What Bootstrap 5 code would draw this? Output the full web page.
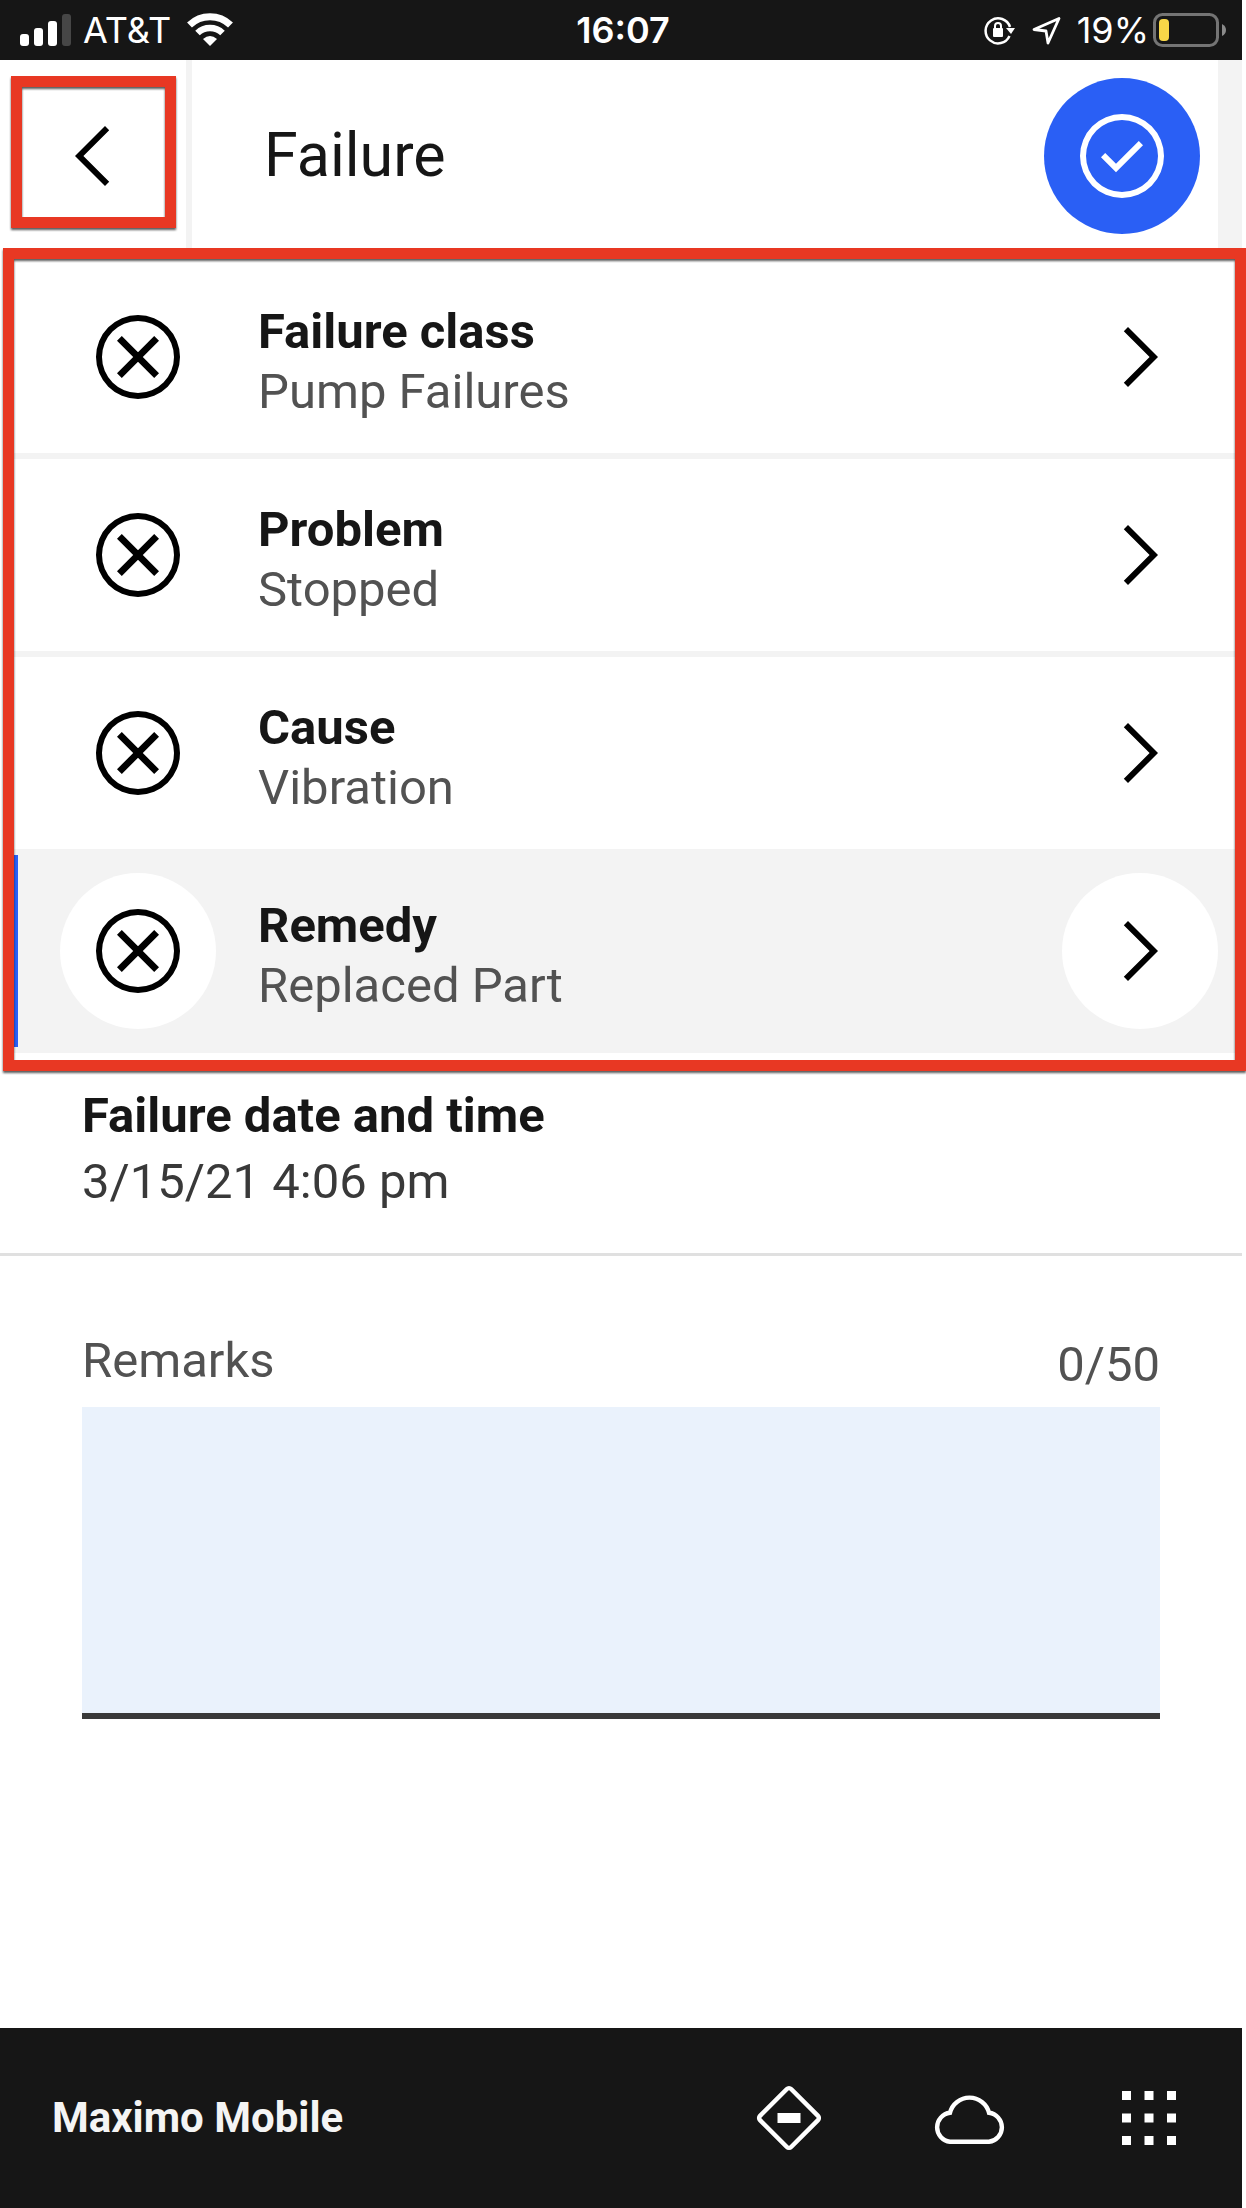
<!DOCTYPE html>
<html lang="en">
<head>
<meta charset="utf-8">
<meta name="viewport" content="width=device-width, initial-scale=1">
<title>Failure</title>
<link href="https://cdn.jsdelivr.net/npm/bootstrap@5.3.0/dist/css/bootstrap.min.css" rel="stylesheet">
<style>
  body { font-family: Roboto, "Noto Sans", sans-serif; font-size: 49px; line-height: 60px; color: #161616; background: #fff; }
  .app { margin-right: 4px; }
  .status { height: 60px; background: #161616; color: #fff; font-family: Inter, sans-serif; font-size: 36px; line-height: 60px; padding: 0 16px 0 20px; }
  .side { flex: 1 1 0; }
  .topbar { height: 192px; border-right: 24px solid #f3f3f3; }
  .back-cell { width: 192px; border-right: 6px solid #f3f3f3; }
  .title { font-size: 61px; font-weight: 400; padding-left: 72px; }
  .round { width: 156px; height: 156px; border-radius: 50%; padding: 0; border: 0; background: transparent; color: #000; flex: none; display: flex; align-items: center; justify-content: center; }
  .round.primary { background: #2a5ff5; color: #fff; margin-right: 18px; }
  .ico { width: 96px; height: 96px; fill: currentColor; display: block; }
  .fields { padding: 9px 0 0 8px; }
  .field { height: 198px; border-bottom: 6px solid #f3f3f3; padding: 0 24px 0 52px; }
  .field-text { padding: 9px 0 0 42px; }
  .field.picked { background: #f3f3f3; box-shadow: inset 10px 0 #2a5ff5; }
  .field.picked .round { background: #fff; }
  .soft { color: #525252; }
  .frame { position: absolute; border: 11px solid #e83823; pointer-events: none; filter: drop-shadow(0 2px 1px rgba(0, 0, 0, .65)); z-index: 2; }
  .frame-back { inset: 16px 10px 24px 11px; }
  .frame-list { inset: -4px -4px -18px 3px; }
  .when { padding: 30px 82px 38px; line-height: 66px; border-bottom: 3px solid #e0e0e0; }
  .when dd { color: #393939; }
  .remarks { padding: 72px 82px; }
  .remarks-head { height: 79px; line-height: 66px; }
  .remarks textarea { height: 312px; background: #eaf2fc; border: 0; border-bottom: 6px solid #393939; border-radius: 0; resize: none; font-size: 49px; }
  .foot { height: 180px; background: #161616; color: #f4f4f4; padding: 0 3px 0 52px; font-size: 42px; }
  .foot-btn { width: 180px; height: 180px; border: 0; padding: 0; background: transparent; color: #fff; display: flex; align-items: center; justify-content: center; }
</style>
</head>
<body>
<svg class="d-none" aria-hidden="true">
  <symbol id="clear" viewBox="0 0 32 32"><path d="M16 2A14 14 0 1 0 30 16 14 14 0 0 0 16 2Zm0 26A12 12 0 1 1 28 16 12 12 0 0 1 16 28Z"/><path d="M21.4 23 16 17.6 10.6 23 9 21.4 14.4 16 9 10.6 10.6 9 16 14.4 21.4 9 23 10.6 17.6 16 23 21.4z"/></symbol>
  <symbol id="next" viewBox="0 0 32 32"><path d="M22 16 12 26l-1.4-1.4 8.6-8.6-8.6-8.6L12 6z"/></symbol>
</svg>
<div class="app d-flex flex-column min-vh-100">
  <div class="status d-flex align-items-center">
    <div class="side d-flex align-items-center">
      <svg width="51" height="32" viewBox="0 0 51 32" fill="#fff"><rect y="20" width="9" height="12" rx="3"/><rect x="14" y="14" width="9" height="18" rx="3"/><rect x="28" y="7" width="9" height="25" rx="3"/><rect x="42" width="9" height="32" rx="3" fill="#464646"/></svg>
      <span class="ps-2 ms-1">AT&amp;T</span>
      <svg class="ms-3" width="46" height="34" viewBox="0 0 46 34" fill="none" stroke="#fff" stroke-width="7"><path d="M2.500 12A29.500 29.500 0 0 1 43.500 12"/><path d="M10.500 20A18 18 0 0 1 35.500 20" stroke-width="6.500"/><path d="M23 33 16 26Q23 20 30 26Z" fill="#fff" stroke="none"/></svg>
    </div>
    <span class="fw-semibold">16:07</span>
    <div class="side d-flex align-items-center justify-content-end">
      <svg width="32" height="29" viewBox="0 0 32 29" fill="none" stroke="#fff" stroke-width="2.500"><path d="M25.500 20A12.500 12.500 0 1 1 26 11"/><path d="M22 12H31L27 18Z" fill="#fff" stroke="none"/><rect x="9" y="12" width="10" height="9" rx="1" fill="#fff" stroke="none"/><path d="M11 13V10A3 3 0 0 1 17 10V13" stroke-width="2"/></svg>
      <svg class="ms-3" width="29" height="29" viewBox="0 0 29 29" fill="none" stroke="#fff" stroke-width="2.800" stroke-linejoin="round"><path d="M2 13.500 27 2.500 16 27 14 15Z"/></svg>
      <span class="ps-3">19%</span>
      <svg class="ms-1" width="73" height="34" viewBox="0 0 73 34"><rect x="1.500" y="1.500" width="63" height="31" rx="8" fill="none" stroke="#747474" stroke-width="3"/><rect x="6" y="6" width="10" height="22" rx="4" fill="#f8d748"/><path d="M69 11Q73 13 73 17T69 23Z" fill="#8a8a8a"/></svg>
    </div>
  </div>

  <header class="topbar d-flex align-items-center">
    <div class="back-cell h-100 position-relative d-flex align-items-center justify-content-center">
      <button type="button" class="round" aria-label="Back"><svg class="ico" viewBox="0 0 32 32"><path d="M10 16 20 6l1.400 1.400L12.800 16l8.600 8.600L20 26z"/></svg></button>
      <div class="frame frame-back"></div>
    </div>
    <h1 class="title flex-grow-1 m-0">Failure</h1>
    <button type="button" class="round primary" aria-label="Save"><svg class="ico" viewBox="0 0 32 32"><path d="M16 2A14 14 0 1 0 30 16 14 14 0 0 0 16 2Zm0 26A12 12 0 1 1 28 16 12 12 0 0 1 16 28Z"/><path d="M14 21.400 9 16.400 10.400 15 14 18.600 21.600 11 23 12.400z"/></svg></button>
  </header>

  <main>
    <section class="fields position-relative">
      <ul class="list-unstyled m-0">
        <li class="field d-flex align-items-center">
          <button type="button" class="round" aria-label="Clear failure class"><svg class="ico"><use href="#clear"/></svg></button>
          <div class="field-text flex-grow-1"><div class="fw-bold">Failure class</div><div class="soft">Pump Failures</div></div>
          <button type="button" class="round" aria-label="Choose failure class"><svg class="ico"><use href="#next"/></svg></button>
        </li>
        <li class="field d-flex align-items-center">
          <button type="button" class="round" aria-label="Clear problem"><svg class="ico"><use href="#clear"/></svg></button>
          <div class="field-text flex-grow-1"><div class="fw-bold">Problem</div><div class="soft">Stopped</div></div>
          <button type="button" class="round" aria-label="Choose problem"><svg class="ico"><use href="#next"/></svg></button>
        </li>
        <li class="field d-flex align-items-center">
          <button type="button" class="round" aria-label="Clear cause"><svg class="ico"><use href="#clear"/></svg></button>
          <div class="field-text flex-grow-1"><div class="fw-bold">Cause</div><div class="soft">Vibration</div></div>
          <button type="button" class="round" aria-label="Choose cause"><svg class="ico"><use href="#next"/></svg></button>
        </li>
        <li class="field picked d-flex align-items-center">
          <button type="button" class="round" aria-label="Clear remedy"><svg class="ico"><use href="#clear"/></svg></button>
          <div class="field-text flex-grow-1"><div class="fw-bold">Remedy</div><div class="soft">Replaced Part</div></div>
          <button type="button" class="round" aria-label="Choose remedy"><svg class="ico"><use href="#next"/></svg></button>
        </li>
      </ul>
      <div class="frame frame-list"></div>
    </section>

    <dl class="when m-0"><dt>Failure date and time</dt><dd class="m-0">3/15/21 4:06 pm</dd></dl>

    <section class="remarks">
      <div class="remarks-head soft d-flex justify-content-between">
        <label for="remarks">Remarks</label>
        <span class="pt-1">0/50</span>
      </div>
      <textarea id="remarks" class="form-control" maxlength="50"></textarea>
    </section>
  </main>

  <footer class="foot d-flex align-items-center mt-auto">
    <span class="fw-bold flex-grow-1">Maximo Mobile</span>
    <button type="button" class="foot-btn" aria-label="Connection"><svg width="66" height="66" viewBox="0 0 66 66"><rect x="11" y="11" width="44" height="44" rx="3" transform="rotate(45 33 33)" fill="none" stroke="#fff" stroke-width="4.500"/><rect x="21.500" y="28" width="23" height="10" fill="#fff"/></svg></button>
    <button type="button" class="foot-btn" aria-label="Sync"><svg width="73" height="52" viewBox="0 0 73 52" fill="none" stroke="#fff" stroke-width="4.400"><path d="M17 49.800H56A14.600 14.600 0 0 0 56 20.800A20 19.500 0 0 0 17 20.800A14.600 14.600 0 0 0 17 49.800Z"/></svg></button>
    <button type="button" class="foot-btn" aria-label="Apps"><svg width="54" height="54" viewBox="0 0 54 54" fill="#fff"><path d="M0 0h9v9H0zM22.500 0h9v9h-9zM45 0h9v9h-9zM0 22.500h9v9H0zM22.500 22.500h9v9h-9zM45 22.500h9v9h-9zM0 45h9v9H0zM22.500 45h9v9h-9zM45 45h9v9h-9z"/></svg></button>
  </footer>
</div>
<script src="https://cdn.jsdelivr.net/npm/bootstrap@5.3.0/dist/js/bootstrap.bundle.min.js"></script>
</body>
</html>
